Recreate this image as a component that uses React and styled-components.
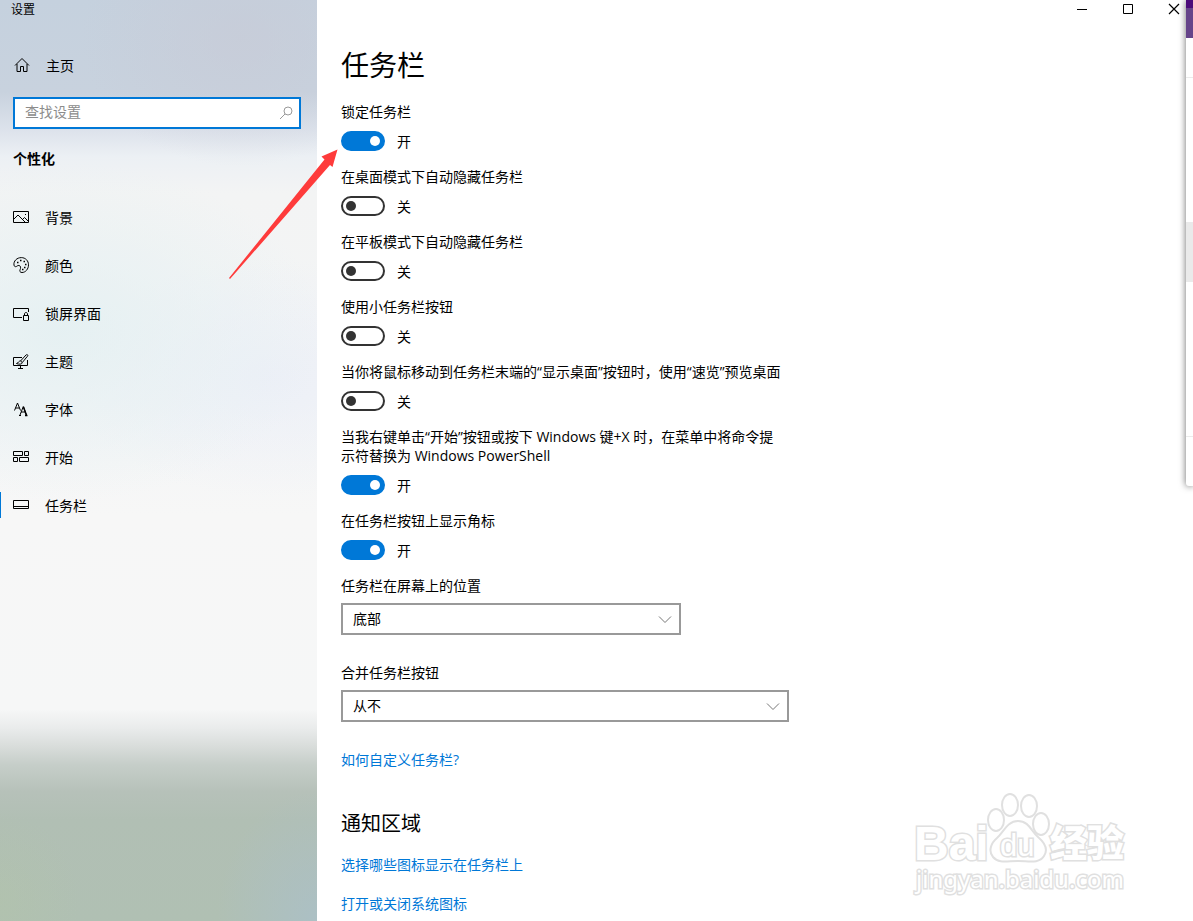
import React, { useState } from "react";
import styled, { createGlobalStyle } from "styled-components";

const GlobalStyle = createGlobalStyle`
  * { box-sizing: border-box; }
  body {
    margin: 0;
    background: #fff;
    color: #000;
    font: 14px/19px "Open Sans", "Noto Sans CJK SC", sans-serif;
  }
  button, input, select { font: inherit; color: inherit; }
`;

const Window = styled.div`
  position: relative;
  display: flex;
  min-height: 100vh;
  overflow: hidden;
`;

const Sidebar = styled.aside`
  flex: 0 0 317px;
  background:
    radial-gradient(ellipse 100px 130px at 100% 100%, rgba(170, 192, 204, 0.7), transparent),
    radial-gradient(ellipse 80px 90px at 0% 98%, rgba(178, 196, 170, 0.5), transparent),
    radial-gradient(ellipse 160px 130px at 76% 4%, rgba(200, 202, 214, 0.6), transparent),
    radial-gradient(ellipse 260px 170px at 20% 36%, rgba(228, 240, 242, 0.9), transparent),
    radial-gradient(ellipse 200px 120px at 85% 41%, rgba(232, 236, 248, 0.6), transparent),
    linear-gradient(
      #c5d1de 0%, #c8d2de 10%, #dce2eb 14%, #ecf0f4 17%, #f3f4f4 21%,
      #f3f5f6 44%, #f7f7f7 56%, #f6f7f7 77%, #eaecec 79%, #d9dddb 81%,
      #c6cec9 83%, #b6c1b9 86%, #b1bfb4 89%, #b0c0b3 100%
    );
`;

const AppName = styled.div`
  height: 43px;
  padding-left: 11px;
  font-size: 12px;
`;

const SideLink = styled.a`
  display: flex;
  align-items: center;
  gap: 16px;
  height: ${(p) => (p.$compact ? 44 : 48)}px;
  padding-left: ${(p) => (p.$compact ? 14 : 12)}px;
  border-left: ${(p) => (p.$compact ? 0 : 1)}px solid transparent;
  border-image: ${(p) =>
    p.$active
      ? "linear-gradient(transparent 25%, #0078d7 25%, #0078d7 75%, transparent 75%) 1"
      : "none"};
  color: inherit;
  text-decoration: none;
`;

const SearchBox = styled.label`
  display: flex;
  align-items: center;
  height: 32px;
  margin: 10px 16px 0 13px;
  padding: 0 5px 0 10px;
  border: 2px solid #0078d7;
  background: #fff;
`;

const SearchInput = styled.input`
  flex: 1;
  min-width: 0;
  padding: 0 0 4px;
  border: 0;
  outline: 0;
  background: none;
  &::placeholder { color: #8c8c8c; opacity: 1; }
`;

const SectionName = styled.h2`
  margin: 20px 0 24px 13px;
  font-size: 14px;
  line-height: 20px;
`;

const Icon = styled.svg`
  flex: none;
  width: 16px;
  height: 16px;
  fill: none;
  stroke: ${(p) => p.$color || "#000"};
`;

const Content = styled.main`
  flex: 1;
  min-width: 0;
`;

const TitleBar = styled.div`
  display: flex;
  justify-content: flex-end;
  height: 16px;
  margin-right: -4px;
`;

const CaptionButton = styled.button`
  display: grid;
  place-items: center;
  width: 46px;
  padding: 0;
  border: 0;
  background: none;
`;

const Panel = styled.div`
  padding: 29px 24px 0;
`;

const PageTitle = styled.h1`
  margin: 0 0 17px;
  font-size: 28px;
  line-height: 40px;
  font-weight: 400;
`;

const Setting = styled.div`
  max-width: 444px;
  margin-bottom: 16px;
`;

const SettingLabel = styled.label`
  display: block;
`;

const SwitchRow = styled.div`
  display: flex;
  align-items: center;
  gap: 12px;
  height: 20px;
  margin-top: 10px;
`;

const Switch = styled.input`
  appearance: none;
  display: flex;
  align-items: center;
  width: 44px;
  height: 20px;
  margin: 0;
  padding: 0 3px;
  border: 2px solid #333;
  border-radius: 10px;
  &::before {
    content: "";
    width: 10px;
    height: 10px;
    border-radius: 50%;
    background: #333;
  }
  &:checked {
    justify-content: flex-end;
    border-color: #0078d7;
    background: #0078d7;
  }
  &:checked::before { background: #fff; }
`;

const Field = styled.div`
  max-width: ${(p) => p.$width}px;
  margin-bottom: 28px;
`;

const SelectBox = styled.div`
  position: relative;
  margin-top: 8px;
  & > svg {
    position: absolute;
    right: 8px;
    top: 8px;
    pointer-events: none;
  }
`;

const Select = styled.select`
  appearance: none;
  display: block;
  width: 100%;
  height: 32px;
  padding: 0 32px 2px 10px;
  border: 2px solid #999;
  border-radius: 0;
  background: #fff;
`;

const TextLink = styled.a`
  display: block;
  width: fit-content;
  margin-bottom: 20px;
  color: #0078d7;
  text-decoration: none;
  &:last-child { margin-bottom: 0; }
`;

const GroupTitle = styled.h2`
  margin: 40px 0 16px;
  font-size: 20px;
  line-height: 30px;
  font-weight: 400;
`;

const BackWindow = styled.div`
  position: absolute;
  top: 0;
  right: 0;
  display: flex;
  flex-direction: column;
  width: 7px;
  height: 486px;
  border-bottom-left-radius: 3px;
  background: #fff;
  box-shadow: 0 0 7px rgba(0, 0, 0, 0.6);
`;

const Strip = styled.div`
  flex: 0 0 ${(p) => p.$height}px;
  background: ${(p) => p.$fill || "none"};
`;

const Pointer = styled.svg`
  position: absolute;
  left: 229px;
  top: 149px;
  pointer-events: none;
`;

const Watermark = styled.svg`
  position: absolute;
  right: 53px;
  bottom: 21px;
  pointer-events: none;
  fill: #fff;
  stroke: #e0e0e0;
  stroke-width: 2px;
  text { paint-order: stroke; stroke-width: 3px; }
`;

const icons = {
  home: <path d="M1 8.500 8 1.500l7 7M3 7v7.500h3.500V9.500h3V14.500H13V7" />,
  picture: (
    <>
      <path d="M.5 2.500h15v11H.500zM1 10l4-4 7 7M9.500 10.500l2-2 3.500 3.500" />
      <path d="M12 5.500h1" />
    </>
  ),
  palette: (
    <>
      <path d="M1 8.200C.3 4 4 .6 8.300.6c4.200 0 7.200 3.200 7.200 7.200 0 4.300-3 7.700-6.500 7.700-2 0-2.600-1.300-1.900-2.800.7-1.700.8-3.700-.9-4.200C4.500 8 3.900 9.700 2.600 9.700 1.700 9.700 1.200 9 1 8.200Z" />
      <path strokeWidth="1.600" d="M4 5.500h1.500M7 3.500h1.500M10.500 4.500H12M12 7.500h1.500M11 10.500h1.500M9 12.500h1.500" />
    </>
  ),
  lock: (
    <>
      <path d="M9 12.500H.500v-9h15V7" />
      <path d="M10.500 10.500h5v5h-5zM11.500 10.500V9c0-2 3-2 3 0v1.500" />
    </>
  ),
  theme: (
    <>
      <path d="M9 4.500H.500v8h14V7M7.500 12.500v3M5 15.500h5" />
      <path d="M7.500 8 13 2c1-1 2.500 0 1.500 1.200L9.300 9.500 7.500 8C5.500 7.800 5.500 10 3.500 10.500c2.500 1 5.500 1 5.800-1" />
    </>
  ),
  font: (
    <>
      <path d="M1.500 9.500 4.500 2l3 7.500M2.500 7h4" />
      <path d="M7 14l3.300-8.500L13.500 14M8 11h4.500M6 14.500h2" />
      <path strokeWidth="1.500" d="m10.500 6 3 8.500M12 14.500h2.500" />
    </>
  ),
  start: <path d="M.5 2.500h9v4h-9zM11.500 2.500h4v4h-4zM.5 8.500h4v4h-4zM6.500 8.500h9v4h-9z" />,
  taskbar: <path d="M.5 3.500h15v8H.500zM.5 9.500h15" />,
  search: (
    <>
      <circle cx="10" cy="6" r="4" />
      <path d="M7 9 2 14" />
    </>
  ),
  chevron: <path d="m2 5.500 6 6 6-6" />,
  minimize: <path d="M3 9.500h10" />,
  maximize: <path d="M3.500 4.500h9v9h-9z" />,
  close: <path strokeWidth="1.200" d="m3 4 10 10M13 4 3 14" />,
};

const Glyph = ({ name, color }) => (
  <Icon viewBox="0 0 16 16" $color={color} aria-hidden="true">
    {icons[name]}
  </Icon>
);

const navItems = [
  ["picture", "背景"],
  ["palette", "颜色"],
  ["lock", "锁屏界面"],
  ["theme", "主题"],
  ["font", "字体"],
  ["start", "开始"],
  ["taskbar", "任务栏"],
];

const switches = [
  ["锁定任务栏", true],
  ["在桌面模式下自动隐藏任务栏", false],
  ["在平板模式下自动隐藏任务栏", false],
  ["使用小任务栏按钮", false],
  ["当你将鼠标移动到任务栏末端的“显示桌面”按钮时，使用“速览”预览桌面", false],
  ["当我右键单击“开始”按钮或按下 Windows 键+X 时，在菜单中将命令提示符替换为 Windows PowerShell", true],
  ["在任务栏按钮上显示角标", true],
];

function SwitchSetting({ id, label, initial }) {
  const [on, setOn] = useState(initial);
  return (
    <Setting>
      <SettingLabel htmlFor={id}>{label}</SettingLabel>
      <SwitchRow>
        <Switch id={id} type="checkbox" role="switch" checked={on} onChange={() => setOn(!on)} />
        <span>{on ? "开" : "关"}</span>
      </SwitchRow>
    </Setting>
  );
}

function SelectSetting({ id, label, width, options }) {
  return (
    <Field $width={width}>
      <SettingLabel htmlFor={id}>{label}</SettingLabel>
      <SelectBox>
        <Select id={id}>
          {options.map((o) => (
            <option key={o}>{o}</option>
          ))}
        </Select>
        <Glyph name="chevron" color="#777" />
      </SelectBox>
    </Field>
  );
}

export default function App() {
  return (
    <Window>
      <GlobalStyle />
      <Sidebar>
        <AppName>设置</AppName>
        <SideLink href="#home" $compact>
          <Glyph name="home" />
          主页
        </SideLink>
        <SearchBox>
          <SearchInput type="text" placeholder="查找设置" aria-label="查找设置" />
          <Glyph name="search" color="#999" />
        </SearchBox>
        <SectionName>个性化</SectionName>
        <nav>
          {navItems.map(([icon, text]) => (
            <SideLink key={icon} href={`#${icon}`} $active={icon === "taskbar"}>
              <Glyph name={icon} />
              {text}
            </SideLink>
          ))}
        </nav>
      </Sidebar>
      <Content>
        <TitleBar>
          {[["minimize", "最小化"], ["maximize", "最大化"], ["close", "关闭"]].map(([name, label]) => (
            <CaptionButton key={name} type="button" aria-label={label}>
              <Glyph name={name} />
            </CaptionButton>
          ))}
        </TitleBar>
        <Panel>
          <PageTitle>任务栏</PageTitle>
          {switches.map(([label, on], i) => (
            <SwitchSetting key={label} id={`switch-${i}`} label={label} initial={on} />
          ))}
          <SelectSetting id="position" label="任务栏在屏幕上的位置" width={340} options={["底部", "顶部", "靠左", "靠右"]} />
          <SelectSetting id="combine" label="合并任务栏按钮" width={448} options={["从不", "始终合并按钮"]} />
          <TextLink href="#customize">如何自定义任务栏?</TextLink>
          <GroupTitle>通知区域</GroupTitle>
          <TextLink href="#icons">选择哪些图标显示在任务栏上</TextLink>
          <TextLink href="#system-icons">打开或关闭系统图标</TextLink>
        </Panel>
      </Content>
      <BackWindow>
        <Strip $height={8} $fill="#4c0a7a" />
        <Strip $height={30} $fill="#66448a" />
        <Strip $height={39} />
        <Strip $height={1} $fill="#ebebeb" />
        <Strip $height={144} />
        <Strip $height={60} $fill="#eaeaea" />
        <Strip $height={154} />
        <Strip $height={1} $fill="#ebebeb" />
      </BackWindow>
      <Pointer width="110" height="131" viewBox="0 0 110 131" aria-hidden="true">
        <path fill="#fe3b3b" d="M108.500.5 92.500 7.500l3 3L0 129l1 1L101 16l2.500 2z" />
      </Pointer>
      <Watermark width="228" height="110" viewBox="0 0 228 110">
        <text x="2" y="70" fontFamily="Liberation Sans" fontWeight="700" fontSize="48">Bai</text>
        <ellipse cx="84" cy="30" rx="8" ry="11" />
        <ellipse cx="98" cy="15" rx="8" ry="11" />
        <ellipse cx="117" cy="16" rx="8" ry="11" />
        <ellipse cx="129" cy="34" rx="8" ry="11" />
        <path d="M106 31c11 0 13 10 20 16s10 13 6 19c-5 8-15 5-26 5s-19 3-25-4c-5-6-2-14 4-19 7-6 10-17 21-17Z" />
        <text x="88" y="66" fontFamily="Liberation Sans" fontSize="31">du</text>
        <text x="138" y="67" fontFamily="Noto Sans CJK SC" fontWeight="900" fontSize="37">经验</text>
        <text x="4" y="98" fontFamily="Noto Sans" fontSize="24">jingyan.baidu.com</text>
      </Watermark>
    </Window>
  );
}
